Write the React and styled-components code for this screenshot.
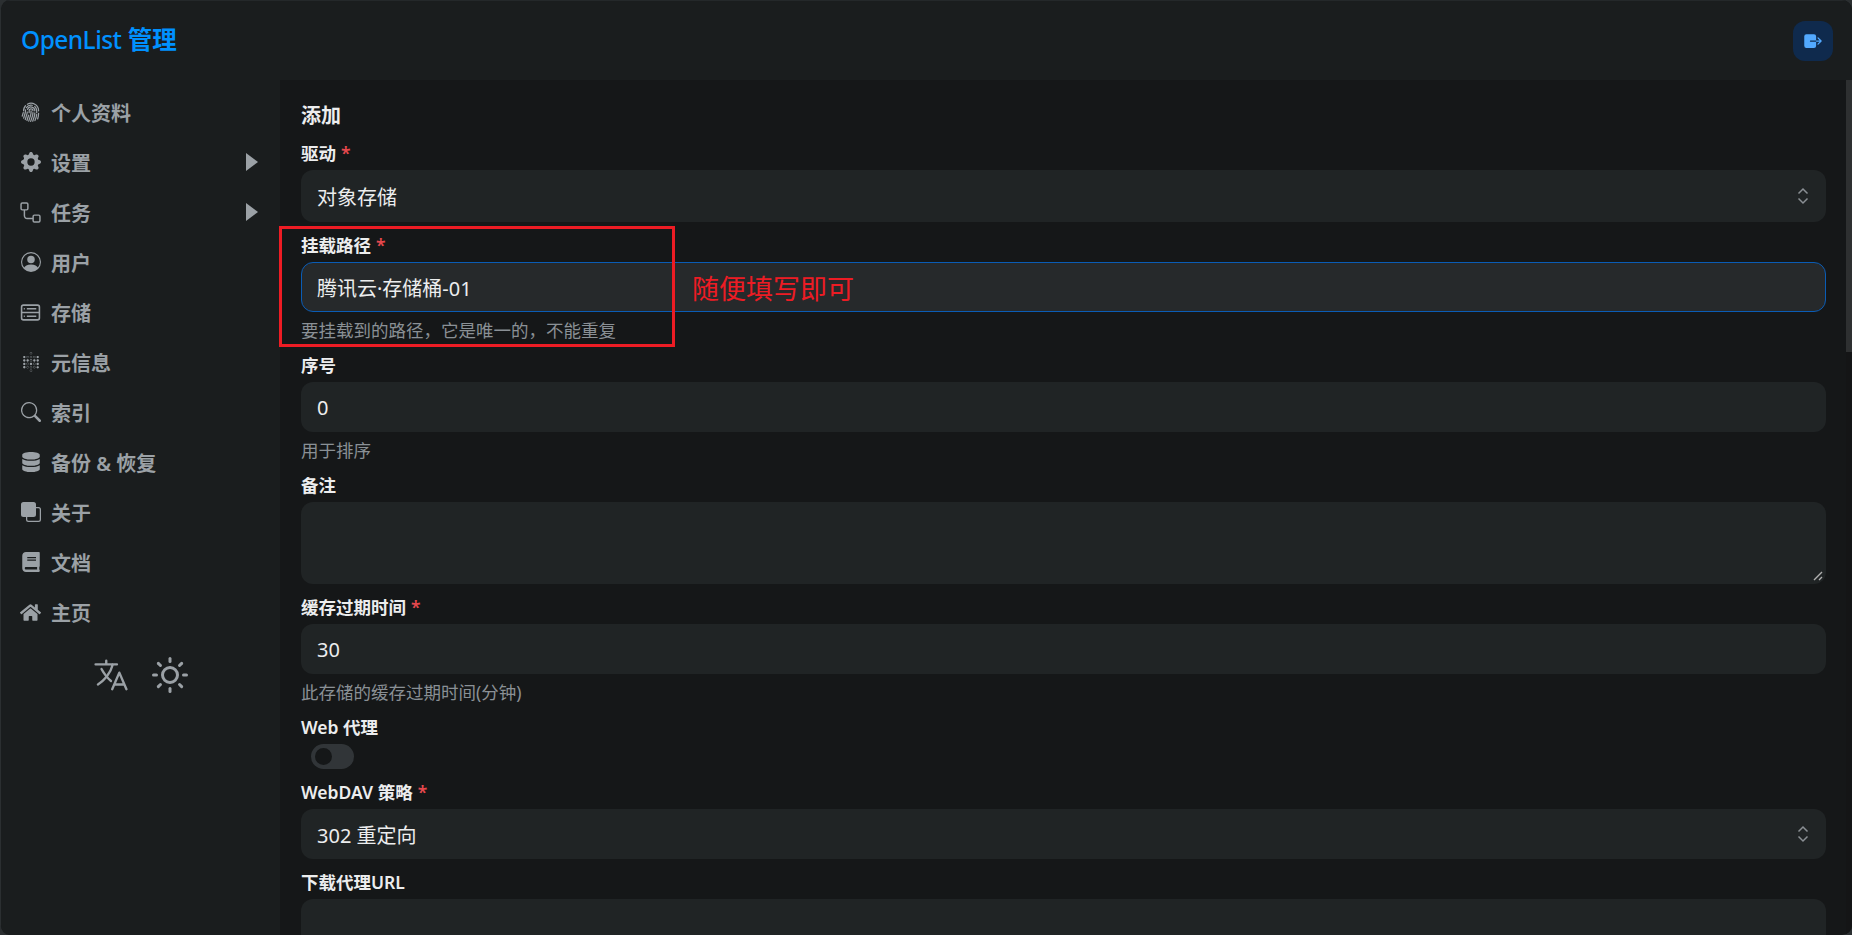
import React from "react";
import styled, { createGlobalStyle } from "styled-components";
import { BsFingerprint, BsGearFill, BsPersonCircle, BsSearch, BsFront } from "react-icons/bs";
import { SiMetabase } from "react-icons/si";
import { FaDatabase, FaBook, FaHome } from "react-icons/fa";
import { IoLanguageOutline, IoExit } from "react-icons/io5";
import { FiSun } from "react-icons/fi";

const GlobalStyle = createGlobalStyle`
  html, body { margin: 0; padding: 0; height: 100%; background: #2b2f31; overflow: hidden; }
  #root { height: 100%; }
  * { box-sizing: border-box; }
  body { font-family: "Noto Sans", "Noto Sans CJK SC", sans-serif; color: #ecedee; }
`;
const Page = styled.div`
  width: 1852px; height: 935px; display: flex; flex-direction: column; overflow: hidden;
  background: #151718; border-left: 1px solid #2b2f31; border-radius: 10px;
`;
const Header = styled.header`
  height: 80px; flex: none; display: flex; align-items: center; justify-content: space-between;
  padding: 0 19px 0 21px; background: #1a1d1e; margin-left: -1px;
  border-top: 1px solid #24282a;
`;
const Logo = styled.div`font-size: 24.5px; font-weight: 700; color: #0091ff; line-height: 1;`;
const LogoLatin = styled.span`letter-spacing: -0.55px; font-weight: 500;`;
const ExitButton = styled.button`
  width: 40px; height: 40px; border: 0; border-radius: 12px; background: #0f2a4d; color: #52a9ff;
  display: flex; align-items: center; justify-content: center; padding: 0;
`;
const Body = styled.div`flex: 1; display: flex; min-height: 0;`;
const Sidebar = styled.nav`
  width: 279px; flex: none; background: #1a1d1e; padding-top: 7px; display: flex; flex-direction: column;
`;
const NavItem = styled.div`
  height: 50px; display: flex; align-items: center; padding: 0 21px 0 19px; gap: 10px; color: #9ba1a6;
  font-size: 20px; font-weight: 600;
`;
const NavIcon = styled.span`width: 21px; height: 21px; display: flex; align-items: center; justify-content: center; flex: none;`;
const NavLabel = styled.span`flex: 1;`;
const Arrow = styled.svg`width: 14px; height: 18px; fill: #9ba1a6;`;
const ToolRow = styled.div`display: flex; justify-content: center; align-items: center; gap: 22px; padding: 19px 2px 0 0; color: #9ba1a6;`;
const Main = styled.main`flex: 1; min-width: 0; display: flex; overflow: hidden;`;
const Form = styled.div`flex: 1; min-width: 0; padding: 22px 20px 0 21px; display: flex; flex-direction: column; overflow: hidden;`;
const Scrollbar = styled.div`width: 6px; flex: none; background: #141516;`;
const Thumb = styled.div`height: 272px; background: #2e3031;`;
const Title = styled.h2`margin: 0 0 12px; font-size: 20px; line-height: 28px; font-weight: 700;`;
const Field = styled.div`position: relative; flex: none; margin-bottom: 12px;`;
const Label = styled.label`display: block; font-size: 17.5px; line-height: 22px; font-weight: 600; margin-bottom: 6px;`;
const Star = styled.span`color: #e5484d; margin-left: 5px;`;
const Control = styled.div`
  height: ${p => p.$h || 50}px; border-radius: 12px; background: ${p => (p.$focus ? "#26292b" : "#202425")};
  border: ${p => (p.$focus ? "1px solid #0a5cb5" : "0")};
  display: flex; align-items: center; justify-content: space-between; padding: 0 ${p => (p.$focus ? 15 : 16)}px;
  font-size: 20px; position: relative; color: #ecedee;
`;
const Help = styled.div`margin: 7px 0 1px; font-size: 17.5px; line-height: 22px; color: #8a9095;`;
const Chevrons = styled.svg`width: 14px; height: 20px; fill: none; stroke: #8a8f94; stroke-width: 1.5;`;
const Grip = styled.svg`position: absolute; right: 3px; bottom: 3px; width: 10px; height: 10px; stroke: #b0b0b0; stroke-width: 1.4;`;
const Switch = styled.div`
  width: 43px; height: 25px; border-radius: 13px; background: #313538; margin: 0 0 0 10px; padding: 4px;
`;
const Knob = styled.div`width: 17px; height: 17px; border-radius: 50%; background: #151718;`;
const Callout = styled.div`
  position: absolute; left: 279px; top: 226px; width: 396px; height: 121px; border: 3px solid #ed1c24; pointer-events: none;
`;
const CalloutText = styled.div`
  position: absolute; left: 692px; top: 271px; font-size: 27px; line-height: 36px; color: #ed1c24; pointer-events: none;
`;

const RouteIcon = () => (
  <svg viewBox="0 0 20 20" width="21" height="21" fill="none" stroke="currentColor" strokeWidth="1.4">
    <rect x="1" y="1" width="6.5" height="6.5" rx="1.2" />
    <rect x="12.5" y="12.5" width="6.5" height="6.5" rx="1.2" />
    <path d="M4.2 7.5V13a2.6 2.6 0 0 0 2.6 2.7h5.7" />
  </svg>
);
const StorageIcon = () => (
  <svg viewBox="0 0 20 20" width="21" height="21" fill="none" stroke="currentColor" strokeWidth="1.5">
    <rect x="1.5" y="3" width="17" height="14" rx="1.8" />
    <path d="M1.5 10h17M6.5 6.5h9M6.5 13.5h9" />
    <path d="M3.6 6.5h1M3.6 13.5h1" />
  </svg>
);
const nav = [
  ["个人资料", <BsFingerprint size={20} />],
  ["设置", <BsGearFill size={20} />, true],
  ["任务", <RouteIcon />, true],
  ["用户", <BsPersonCircle size={20} />],
  ["存储", <StorageIcon />],
  ["元信息", <SiMetabase size={20} />],
  ["索引", <BsSearch size={20} />],
  ["备份 & 恢复", <FaDatabase size={20} />],
  ["关于", <BsFront size={20} />],
  ["文档", <FaBook size={20} />],
  ["主页", <FaHome size={21} />],
];
const Select = ({ h, children }) => (
  <Control $h={h}>
    {children}
    <Chevrons viewBox="0 0 14 20"><path d="M2.5 7.5 7 3l4.5 4.5M2.5 12.5 7 17l4.5-4.5" /></Chevrons>
  </Control>
);

export default function App() {
  return (
    <>
      <GlobalStyle />
      <Page>
        <Header>
          <Logo><LogoLatin>OpenList</LogoLatin> 管理</Logo>
          <ExitButton><IoExit size={20} /></ExitButton>
        </Header>
        <Body>
          <Sidebar>
            {nav.map(([t, icon, arrow]) => (
              <NavItem key={t}>
                <NavIcon>{icon}</NavIcon>
                <NavLabel>{t}</NavLabel>
                {arrow && <Arrow viewBox="0 0 14 18"><path d="M1 0l12 9-12 9z" /></Arrow>}
              </NavItem>
            ))}
            <ToolRow>
              <IoLanguageOutline size={38} />
              <FiSun size={36} />
            </ToolRow>
          </Sidebar>
          <Main>
            <Form>
              <Title>添加</Title>
              <Field><Label>驱动<Star>*</Star></Label><Select h={52}>对象存储</Select></Field>
              <Field>
                <Label>挂载路径<Star>*</Star></Label>
                <Control $focus>腾讯云·存储桶-01</Control>
                <Help>要挂载到的路径，它是唯一的，不能重复</Help>
              </Field>
              <Field><Label>序号</Label><Control>0</Control><Help>用于排序</Help></Field>
              <Field>
                <Label>备注</Label>
                <Control $h={82}><Grip viewBox="0 0 10 10"><path d="M9 1 1 9M9 6 6 9" /></Grip></Control>
              </Field>
              <Field><Label>缓存过期时间<Star>*</Star></Label><Control>30</Control><Help>此存储的缓存过期时间(分钟)</Help></Field>
              <Field><Label>Web 代理</Label><Switch><Knob /></Switch></Field>
              <Field><Label>WebDAV 策略<Star>*</Star></Label><Select>302 重定向</Select></Field>
              <Field><Label>下载代理URL</Label><Control /></Field>
            </Form>
            <Scrollbar><Thumb /></Scrollbar>
          </Main>
        </Body>
        <Callout />
        <CalloutText>随便填写即可</CalloutText>
      </Page>
    </>
  );
}
